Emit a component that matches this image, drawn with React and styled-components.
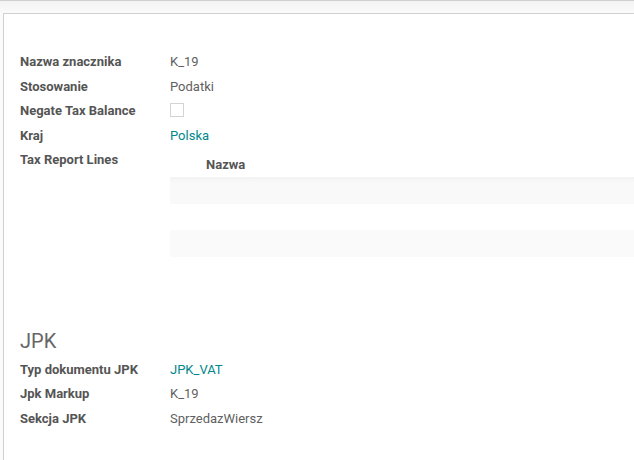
import React from 'react'
import styled, { createGlobalStyle } from 'styled-components'

const Global = createGlobalStyle`
  html, body {
    margin: 0;
    padding: 0;
    background: #f9f9f9;
    font-family: Roboto, "Noto Sans", sans-serif;
    font-size: 13px;
    color: #5c5c5c;
    overflow: hidden;
  }
`;

const Page = styled.div`
  width: 634px;
  height: 460px;
  overflow: hidden;
  border-top: 1px solid #cfcfcf;
  background: linear-gradient(#f3f3f3, #fbfbfb 13px);
  box-sizing: border-box;
  padding: 12px 0 0 3px;
`;

const Sheet = styled.div`
  width: 700px;
  height: 500px;
  background: #fff;
  border-top: 1px solid #d0d0d0;
  border-left: 1px solid #d0d0d0;
  box-sizing: border-box;
  padding: 36px 0 0 16px;
`;

const Group = styled.div`
  display: grid;
  grid-template-columns: 150px 1fr;
  grid-auto-rows: minmax(24.5px, auto);
  align-items: start;
`;

const Label = styled.div`
  font-weight: 700;
  color: #555;
  line-height: 24.5px;
  white-space: nowrap;
`;

const Value = styled.div`
  line-height: 24.5px;
  color: ${p => (p.$link ? '#00888a' : '#5f5f5f')};
`;

const Check = styled.span`
  display: inline-block;
  width: 12px;
  height: 12px;
  border: 1px solid #d4d4d4;
  background: #fff;
  vertical-align: middle;
  margin-top: -3px;
`;

const Table = styled.div`
  display: flex;
  flex-direction: column;
  margin-top: -1px;
`;

const HeadRow = styled.div`
  height: 26px;
  display: flex;
  align-items: center;
  padding-left: 36px;
  font-weight: 700;
  color: #555;
  margin-top: 4px;
`;

const Row = styled.div`
  height: 26.5px;
  background: ${p => (p.$shade ? '#fafafa' : '#fff')};
  ${p => p.$first && 'background: linear-gradient(#f2f2f2, #f9f9f9 6px, #f9f9f9);'}
`;

const Heading = styled.div`
  font-size: 20px;
  color: #666;
  margin: 72px 0 5px;
  line-height: 24px;
`;

const rows1 = [
  ['Nazwa znacznika', 'K_19'],
  ['Stosowanie', 'Podatki'],
]

const rows2 = [
  ['Typ dokumentu JPK', 'JPK_VAT', true],
  ['Jpk Markup', 'K_19'],
  ['Sekcja JPK', 'SprzedazWiersz'],
]

const App = () => (
  <>
    <Global />
    <Page>
      <Sheet>
        <Group>
          {rows1.map(([l, v]) => (
            <React.Fragment key={l}>
              <Label>{l}</Label>
              <Value>{v}</Value>
            </React.Fragment>
          ))}
          <Label>Negate Tax Balance</Label>
          <Value><Check /></Value>
          <Label>Kraj</Label>
          <Value $link>Polska</Value>
          <Label>Tax Report Lines</Label>
          <Table>
            <HeadRow>Nazwa</HeadRow>
            <Row $first />
            <Row />
            <Row $shade />
          </Table>
        </Group>
        <Heading>JPK</Heading>
        <Group>
          {rows2.map(([l, v, link]) => (
            <React.Fragment key={l}>
              <Label>{l}</Label>
              <Value $link={link}>{v}</Value>
            </React.Fragment>
          ))}
        </Group>
      </Sheet>
    </Page>
  </>
)

export default App
